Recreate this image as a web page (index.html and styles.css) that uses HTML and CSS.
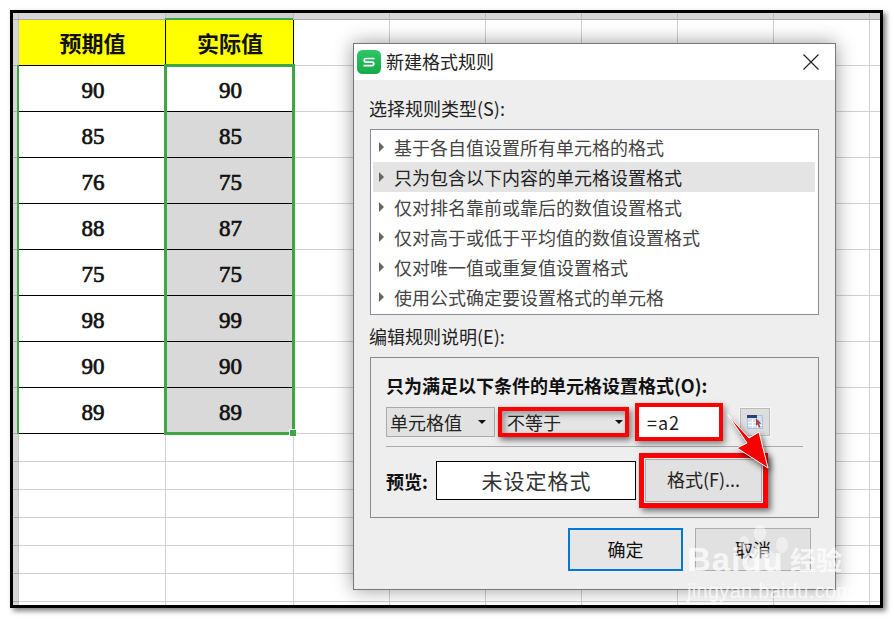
FILE: index.html
```html
<!DOCTYPE html>
<html lang="zh">
<head>
<meta charset="utf-8">
<title>新建格式规则</title>
<link rel="stylesheet" href="styles.css">
</head>
<body>
<main class="frame">
  <div class="row band"><i class="rh"></i><i class="bc"></i><i class="bc bc-sel"></i><i class="rest"></i></div>
  <div class="row tall"><i class="rh"></i><div class="cell head">预期值</div><div class="cell head">实际值</div><i class="rest"></i></div>
  <div class="row tall"><i class="rh"></i><div class="cell">90</div><div class="cell">90</div><i class="rest"></i></div>
  <div class="row tall"><i class="rh"></i><div class="cell">85</div><div class="cell hit">85</div><i class="rest"></i></div>
  <div class="row tall"><i class="rh"></i><div class="cell">76</div><div class="cell hit">75</div><i class="rest"></i></div>
  <div class="row tall"><i class="rh"></i><div class="cell">88</div><div class="cell hit">87</div><i class="rest"></i></div>
  <div class="row tall"><i class="rh"></i><div class="cell">75</div><div class="cell hit">75</div><i class="rest"></i></div>
  <div class="row tall"><i class="rh"></i><div class="cell">98</div><div class="cell hit">99</div><i class="rest"></i></div>
  <div class="row tall"><i class="rh"></i><div class="cell">90</div><div class="cell hit">90</div><i class="rest"></i></div>
  <div class="row tall"><i class="rh"></i><div class="cell">89</div><div class="cell hit">89</div><i class="rest"></i></div>
  <div class="row short"><i class="rh"></i><i class="blank"></i><i class="blank"></i><i class="rest"></i></div>
  <div class="row short"><i class="rh"></i><i class="blank"></i><i class="blank"></i><i class="rest"></i></div>
  <div class="row short"><i class="rh"></i><i class="blank"></i><i class="blank"></i><i class="rest"></i></div>
  <div class="row short"><i class="rh"></i><i class="blank"></i><i class="blank"></i><i class="rest"></i></div>
  <div class="row short"><i class="rh"></i><i class="blank"></i><i class="blank"></i><i class="rest"></i></div>
  <div class="row short"><i class="rh"></i><i class="blank"></i><i class="blank"></i><i class="rest"></i></div>
  <div class="row short"><i class="rh"></i><i class="blank"></i><i class="blank"></i><i class="rest"></i></div>

  <i class="sel-head"></i>
  <i class="sel-strip"></i>
  <div class="selection"><i class="handle"></i></div>

  <section class="dialog">
    <header class="titlebar">
      <svg class="logo" viewBox="0 0 24 24" width="24" height="24" aria-hidden="true">
        <defs><linearGradient id="lg" x1="0" y1="0" x2="0" y2="1"><stop offset="0" stop-color="#2cc765"/><stop offset="1" stop-color="#17a94b"/></linearGradient></defs>
        <rect width="24" height="24" rx="5.5" fill="url(#lg)"/>
        <path d="M17.500 8.500H9a1.800 1.800 0 0 0 0 3.600h6a1.800 1.800 0 0 1 0 3.600H6.500" fill="none" stroke="#fff" stroke-width="1.700"/>
      </svg>
      <span class="title">新建格式规则</span>
      <svg class="close" viewBox="0 0 16 16" width="16" height="16" aria-hidden="true"><path d="M.5.5l15 15M15.500.5l-15 15" stroke="#222" stroke-width="1.200" fill="none"/></svg>
    </header>
    <div class="body">
      <div class="label">选择规则类型(S):</div>
      <ul class="list">
        <li><i class="tri"></i>基于各自值设置所有单元格的格式</li>
        <li class="active"><i class="tri"></i>只为包含以下内容的单元格设置格式</li>
        <li><i class="tri"></i>仅对排名靠前或靠后的数值设置格式</li>
        <li><i class="tri"></i>仅对高于或低于平均值的数值设置格式</li>
        <li><i class="tri"></i>仅对唯一值或重复值设置格式</li>
        <li><i class="tri"></i>使用公式确定要设置格式的单元格</li>
      </ul>
      <div class="label label-2">编辑规则说明(E):</div>
      <div class="group">
        <div class="strong">只为满足以下条件的单元格设置格式(O):</div>
        <div class="controls">
          <div class="combo">单元格值<i class="down"></i></div>
          <div class="combo combo-mark">不等于<i class="down"></i></div>
          <div class="input-mark">=a2</div>
          <div class="refbtn">
            <svg viewBox="0 0 16 16" width="16" height="16" aria-hidden="true">
              <rect x=".5" y="1.500" width="15" height="13" fill="#cfe0f6" stroke="#a9c4e8"/>
              <rect x="0" y="1" width="10" height="3" fill="#33406b"/>
              <path d="M1 8.500h14M1 11.500h14M5.500 5v9M10.500 5v9" stroke="#fff"/>
              <path d="M9 4l5.500 5.500-2.500.2 1.600 3.300-1.500.7-1.600-3.300-1.500 1.500z" fill="#a5483d"/>
            </svg>
          </div>
        </div>
        <hr class="sep">
        <div class="preview-row">
          <div class="strong preview-label">预览:</div>
          <div class="preview">未设定格式</div>
          <div class="fmt-mark"><div class="fmt-btn">格式(F)...</div></div>
        </div>
      </div>
      <div class="footer">
        <div class="btn btn-ok">确定</div>
        <div class="btn">取消</div>
      </div>
    </div>
  </section>

  <svg class="arrow" viewBox="725 412 48 60" width="48" height="60" aria-hidden="true">
    <path d="M728 415L749 438L759 432L768 468L737 448L747 443Z" fill="#f80000" stroke="#fff" stroke-width="1"/>
  </svg>

  <div class="wm">
    <svg class="paw" viewBox="0 0 70 70" width="70" height="70" aria-hidden="true">
      <ellipse cx="11" cy="28" rx="5" ry="7"/><ellipse cx="27" cy="18" rx="6" ry="8"/><ellipse cx="49" cy="30" rx="6" ry="8"/>
      <path d="M31 33c7 0 10 6 14 11 4 6 1 13-6 13-3 0-5-2-8-2s-5 2-8 2c-7 0-10-7-6-13 4-5 7-11 14-11z"/>
    </svg>
    <span class="wm-logo">Baidu</span>
    <span class="wm-cn">经验</span>
    <span class="wm-url">jingyan.baidu.com</span>
  </div>
</main>
</body>
</html>
```
FILE: styles.css
```css
* { box-sizing: border-box; }
html, body { margin: 0; padding: 0; background: #fff; }
body { width: 894px; height: 619px; overflow: hidden; font-family: "Noto Sans CJK SC", sans-serif; }
i { display: block; font-style: normal; }

.frame {
  position: relative;
  width: 873px;
  height: 598px;
  margin: 10px 0 0 10px;
  border: 3px solid #000;
  background: #fff;
  overflow: hidden;
  box-shadow: 3px 3px 5px rgba(0,0,0,.5);
}

.row { display: grid; grid-template-columns: 6px 147px 128px 1fr; }
.band { height: 7px; background: #d6d6d6; border-bottom: 1px solid #aaa; }
.tall { height: 46px; }
.short { height: 28px; }

.rh { background: #d6d6d6; border-right: 1px solid #c4c4c4; border-bottom: 1px solid #aaa; }
.band .rh { border-bottom: 0; }
.bc { border-right: 1px solid #bdbdbd; }
.bc-sel { background: #cfcfcf; }
.rest {
  border-bottom: 1px solid #d0d0d0;
  background: repeating-linear-gradient(to right, transparent 0 95px, #d0d0d0 95px 96px);
}
.band .rest { border-bottom: 0; background: repeating-linear-gradient(to right, transparent 0 95px, #bdbdbd 95px 96px); }
.blank { border-right: 1px solid #d0d0d0; border-bottom: 1px solid #d0d0d0; }

.cell {
  display: flex;
  align-items: center;
  justify-content: center;
  padding: 4px 0 0 2px;
  border-right: 1px solid #000;
  border-bottom: 1px solid #000;
  font: 400 23px/1 "Liberation Serif", "Noto Sans CJK SC", serif;
  -webkit-text-stroke: .7px #111;
  color: #111;
}
.head { padding: 0 0 2px 1px; background: #ff0; -webkit-text-stroke: 0; font: 700 22px/1 "Noto Sans CJK SC", serif; }
.hit { background: #d9d9d9; }

.selection {
  position: absolute;
  left: 151px;
  top: 51px;
  width: 131px;
  height: 371px;
  border: 3px solid #3fa648;
}
.handle {
  position: absolute;
  right: -4px;
  bottom: -4px;
  width: 6px;
  height: 6px;
  background: #3fa648;
  outline: 1px solid #fff;
}
.sel-strip { position: absolute; left: 4px; top: 52px; width: 2px; height: 369px; background: #3fa648; }
.sel-head { position: absolute; left: 152px; top: 5px; width: 128px; height: 2px; background: #3fa648; }

.dialog {
  position: absolute;
  left: 340px;
  top: 30px;
  width: 483px;
  height: 547px;
  border: 1px solid #777;
  background: #eee;
  box-shadow: 0 0 18px rgba(0,0,0,.4);
  font-size: 18px;
  color: #222;
}
.titlebar { display: flex; align-items: center; height: 36px; padding: 0 16px 0 3px; background: #fff; }
.logo { flex: none; }
.title { margin: 0 0 2px 5px; line-height: 24px; }
.close { margin-left: auto; }

.body { display: flex; flex-direction: column; padding: 16px 16px 0; }
.label { margin-left: -1px; line-height: 24px; }
.label-2 { margin-top: 9px; }

.list {
  list-style: none;
  margin: 9px 0 0;
  padding: 2px 3px 3px 2px;
  width: 449px;
  height: 186px;
  border: 1px solid #8a8a96;
  background: #fff;
  color: #444;
}
.list li { display: flex; align-items: center; height: 30px; padding-left: 6px; }
.list .active { background: #e4e4e4; color: #222; }
.tri {
  width: 0;
  height: 0;
  margin-right: 10px;
  border-left: 5px solid #666;
  border-top: 5px solid transparent;
  border-bottom: 5px solid transparent;
}

.group {
  margin-top: 9px;
  width: 449px;
  height: 161px;
  padding: 15px 15px 0;
  border: 1px solid #8a8a8a;
}
.strong { font-weight: 700; line-height: 24px; color: #111; }
.controls { display: flex; align-items: center; height: 38px; margin-top: 6px; }
.combo {
  position: relative;
  display: flex;
  align-items: center;
  width: 109px;
  height: 30px;
  padding-left: 3px;
  border: 1px solid #aaa;
  background: #e1e1e1;
  line-height: 1;
}
.down {
  position: absolute;
  right: 8px;
  top: 12px;
  border-top: 4px solid #111;
  border-left: 4px solid transparent;
  border-right: 4px solid transparent;
}
.combo-mark {
  width: 131px;
  margin-left: 3px;
  padding-left: 5px;
  border: 4px solid #f00;
  background: #e4e4e4;
  box-shadow: 2px 3px 6px rgba(0,0,0,.55), inset 3px 3px 6px rgba(0,0,0,.35);
}
.combo-mark .down { right: 2px; top: 9px; }
.input-mark {
  display: flex;
  align-items: center;
  width: 88px;
  height: 38px;
  margin-left: 6px;
  padding-left: 8px;
  border: 4px solid #f00;
  background: #fff;
  box-shadow: 2px 3px 6px rgba(0,0,0,.45);
  letter-spacing: 1px;
  line-height: 1;
}
.refbtn {
  display: flex;
  align-items: center;
  justify-content: center;
  width: 30px;
  height: 28px;
  margin-left: 17px;
  border: 1px solid #bbb;
  background: #ddd;
  box-shadow: 0 0 0 1px #f6f6f6;
}
.sep { width: 417px; height: 1px; margin: 5px 0 0; border: 0; background: #aaa; }
.preview-row { display: flex; align-items: center; height: 55px; margin-top: 6px; }
.preview-label { width: 50px; }
.preview {
  width: 200px;
  height: 39px;
  padding-left: 1px;
  border: 1px solid #000;
  background: #fff;
  color: #333;
  font-size: 21px;
  line-height: 36px;
  letter-spacing: 1px;
  text-align: center;
}
.fmt-mark {
  width: 129px;
  height: 55px;
  margin-left: 3px;
  padding: 1px;
  border: 5px solid #f00;
  background: #eee;
  box-shadow: 3px 3px 6px rgba(0,0,0,.55);
}
.fmt-btn {
  height: 100%;
  border: 1px solid #aaa;
  background: #e1e1e1;
  text-align: center;
  line-height: 38px;
  color: #222;
}

.footer { display: flex; justify-content: flex-end; gap: 12px; margin-top: 10px; padding-right: 8px; }
.btn {
  width: 116px;
  height: 43px;
  border: 1px solid #adadad;
  background: #e1e1e1;
  text-align: center;
  line-height: 41px;
  color: #111;
}
.btn-ok { width: 115px; border: 2px solid #0078d7; line-height: 39px; background: #e6e6e6; }

.arrow { position: absolute; left: 712px; top: 399px; filter: drop-shadow(2px 3px 3px rgba(0,0,0,.6)); overflow: visible; }

.wm { position: absolute; left: 674px; top: 520px; width: 175px; height: 72px; color: rgba(255,255,255,.72); }
.paw { position: absolute; left: 46px; top: -18px; fill: rgba(255,255,255,.45); }
.wm-logo {
  position: absolute;
  left: 0;
  top: 5px;
  font: 700 33px/44px "Liberation Sans", sans-serif;
  letter-spacing: 1px;
}
.wm-cn { position: absolute; left: 103px; top: 9px; font-size: 26px; line-height: 34px; font-weight: 700; }
.wm-url { position: absolute; left: 0; top: 45px; font: 400 20px/26px "Liberation Sans", sans-serif; letter-spacing: .3px; }
```
